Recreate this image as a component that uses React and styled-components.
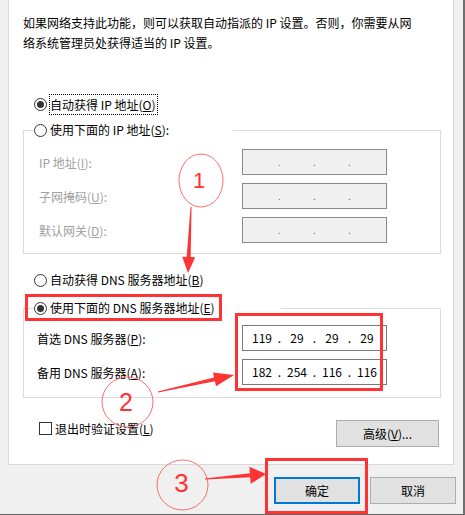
import React from 'react';
import styled, { createGlobalStyle } from 'styled-components';

const GlobalStyle = createGlobalStyle`
  html, body {
    margin: 0;
    padding: 0;
    background: #f0f0f0;
  }
  body {
    font-family: "Noto Sans CJK SC", "Microsoft YaHei", sans-serif;
    font-size: 12px;
    color: #000;
  }
`;

const arrowPoints = (x1, y1, x2, y2, headLen, headW, shaftW) => {
  const dx = x2 - x1;
  const dy = y2 - y1;
  const len = Math.hypot(dx, dy);
  const ux = dx / len;
  const uy = dy / len;
  const px = -uy;
  const py = ux;
  const bx = x2 - ux * headLen;
  const by = y2 - uy * headLen;
  const pts = [
    [x1 + px * 0.5, y1 + py * 0.5],
    [bx + px * shaftW / 2, by + py * shaftW / 2],
    [bx + px * headW / 2, by + py * headW / 2],
    [x2, y2],
    [bx - px * headW / 2, by - py * headW / 2],
    [bx - px * shaftW / 2, by - py * shaftW / 2],
    [x1 - px * 0.5, y1 - py * 0.5],
  ];
  return pts.map(p => p.map(v => v.toFixed(1)).join(',')).join(' ');
};

const App = () => {
  return (
    <Window>
      <GlobalStyle />
      <Panel>
        <Intro>
          如果网络支持此功能，则可以获取自动指派的 IP 设置。否则，你需要从网<br />
          络系统管理员处获得适当的 IP 设置。
        </Intro>

        <RadioRow $top={41}>
          <RadioCircle $checked />
          <Focused>自动获得 IP 地址(<u>O</u>)</Focused>
        </RadioRow>

        <Group $top={6} $padTop={9} $padBottom={10}>
          <GroupLegend $width={199}>
            <RadioCircle />
            <span>使用下面的 IP 地址(<u>S</u>):</span>
          </GroupLegend>
          <FieldRow $indent={15}>
            <FieldLabel $disabled>IP 地址(<u>I</u>):</FieldLabel>
            <IpBox $disabled>
              <Seg /><Dot $disabled>.</Dot><Seg /><Dot $disabled>.</Dot><Seg /><Dot $disabled>.</Dot><Seg />
            </IpBox>
          </FieldRow>
          <FieldRow $indent={15}>
            <FieldLabel $disabled>子网掩码(<u>U</u>):</FieldLabel>
            <IpBox $disabled>
              <Seg /><Dot $disabled>.</Dot><Seg /><Dot $disabled>.</Dot><Seg /><Dot $disabled>.</Dot><Seg />
            </IpBox>
          </FieldRow>
          <FieldRow $indent={15}>
            <FieldLabel $disabled>默认网关(<u>D</u>):</FieldLabel>
            <IpBox $disabled>
              <Seg /><Dot $disabled>.</Dot><Seg /><Dot $disabled>.</Dot><Seg /><Dot $disabled>.</Dot><Seg />
            </IpBox>
          </FieldRow>
        </Group>

        <RadioRow $top={16}>
          <RadioCircle />
          <span>自动获得 DNS 服务器地址(<u>B</u>)</span>
        </RadioRow>

        <Group $top={8} $padTop={7} $padBottom={12}>
          <GroupLegend $width={247}>
            <RadioCircle $checked />
            <span>使用下面的 DNS 服务器地址(<u>E</u>)</span>
          </GroupLegend>
          <FieldRow $indent={13}>
            <FieldLabel>首选 DNS 服务器(<u>P</u>):</FieldLabel>
            <IpBox>
              <Seg>119</Seg><Dot>.</Dot><Seg>29</Seg><Dot>.</Dot><Seg>29</Seg><Dot>.</Dot><Seg>29</Seg>
            </IpBox>
          </FieldRow>
          <FieldRow $indent={13}>
            <FieldLabel>备用 DNS 服务器(<u>A</u>):</FieldLabel>
            <IpBox>
              <Seg>182</Seg><Dot>.</Dot><Seg>254</Seg><Dot>.</Dot><Seg>116</Seg><Dot>.</Dot><Seg>116</Seg>
            </IpBox>
          </FieldRow>
        </Group>

        <OptionsRow>
          <CheckLabel>
            <CheckBox />
            <span>退出时验证设置(<u>L</u>)</span>
          </CheckLabel>
          <Button $width={103}>高级(<u>V</u>)...</Button>
        </OptionsRow>
      </Panel>

      <ButtonBar>
        <Button $width={86} $default>确定</Button>
        <Button $width={86}>取消</Button>
      </ButtonBar>

      <Overlay viewBox="0 0 465 515" width="465" height="515">
        <rect x="26.5" y="295.5" width="194" height="24" fill="none" stroke="#ff3333" strokeWidth="3" />
        <rect x="236.5" y="314.5" width="145" height="75" fill="none" stroke="#ff3333" strokeWidth="3" />
        <rect x="266.5" y="459.5" width="100" height="53" fill="none" stroke="#ff3333" strokeWidth="3" />

        <ellipse cx="201" cy="180.5" rx="22" ry="26.5" fill="none" stroke="#ff6b6b" strokeWidth="1" />
        <ellipse cx="127.5" cy="402" rx="25.5" ry="25" fill="none" stroke="#ff6b6b" strokeWidth="1" />
        <ellipse cx="182.5" cy="485" rx="25.5" ry="25" fill="none" stroke="#ff6b6b" strokeWidth="1" />

        <NumberText x="199" y="188" fontSize="22">1</NumberText>
        <NumberText x="126" y="411" fontSize="25">2</NumberText>
        <NumberText x="181.5" y="492" fontSize="26">3</NumberText>

        <polygon points={arrowPoints(191, 207, 188, 273, 16, 13, 4)} fill="#ff3333" />
        <polygon points={arrowPoints(158, 392, 234, 375, 20, 14, 4)} fill="#ff3333" />
        <polygon points={arrowPoints(205, 479, 266, 474, 16, 17, 4)} fill="#ff3333" />
      </Overlay>
    </Window>
  );
};

export default App;

const Window = styled.div`
  position: relative;
  width: 465px;
  height: 515px;
  box-sizing: border-box;
  background: #f0f0f0;
  border-right: 2px solid #6e6e6e;
  border-bottom: 1px solid #646464;
  display: flex;
  flex-direction: column;
  overflow: hidden;
`;

const Panel = styled.div`
  margin-left: 8px;
  width: 446px;
  height: 465px;
  box-sizing: border-box;
  background: #fff;
  border: 1px solid #d9d9d9;
  border-top: none;
  padding: 13px 12px 0 14px;
  display: flex;
  flex-direction: column;
`;

const Intro = styled.p`
  margin: 0;
  line-height: 20px;
  white-space: nowrap;
`;

const RadioRow = styled.div`
  margin-top: ${p => p.$top}px;
  height: 20px;
  padding-left: 11px;
  display: flex;
  align-items: center;
  gap: 3px;
  line-height: 20px;
`;

const RadioCircle = styled.span`
  flex: none;
  position: relative;
  width: 13px;
  height: 13px;
  box-sizing: border-box;
  border: 1px solid #333;
  border-radius: 50%;
  background: #fff;

  &::after {
    content: '';
    display: ${p => (p.$checked ? 'block' : 'none')};
    position: absolute;
    left: 2px;
    top: 2px;
    width: 7px;
    height: 7px;
    border-radius: 50%;
    background: #333;
  }
`;

const Focused = styled.span`
  border: 1px dotted #000;
  padding: 0 1px 0 0;
  margin-left: -1px;
  line-height: 19px;
`;

const Group = styled.fieldset`
  margin: ${p => p.$top}px 0 0 0;
  width: 418px;
  box-sizing: border-box;
  min-width: 0;
  padding: ${p => p.$padTop}px 0 ${p => p.$padBottom}px 0;
  border: 1px solid #dcdcdc;
  display: flex;
  flex-direction: column;
  gap: 8px;
`;

const GroupLegend = styled.legend`
  margin-left: 10px;
  padding: 0;
  width: ${p => p.$width}px;
  height: 20px;
  display: flex;
  align-items: center;
  gap: 3px;
  line-height: 20px;
  background: #fff;
`;

const FieldRow = styled.div`
  display: grid;
  grid-template-columns: ${p => 218 - p.$indent}px 145px;
  align-items: center;
  padding-left: ${p => p.$indent}px;
  height: 26px;
`;

const FieldLabel = styled.span`
  color: ${p => (p.$disabled ? '#a0a0a0' : '#000')};
`;

const IpBox = styled.div`
  height: 26px;
  box-sizing: border-box;
  border: 1px solid ${p => (p.$disabled ? '#8a8a8a' : '#7a7a7a')};
  background: ${p => (p.$disabled ? '#f0f0f0' : '#fff')};
  display: flex;
  align-items: center;
  padding-left: 3.5px;
`;

const Seg = styled.span`
  width: 31px;
  text-align: center;
  line-height: 20px;
`;

const Dot = styled.span`
  width: 4px;
  text-align: center;
  line-height: 20px;
  color: ${p => (p.$disabled ? '#707070' : '#000')};
  font-size: ${p => (p.$disabled ? '10px' : '12px')};
`;

const OptionsRow = styled.div`
  margin-top: 22px;
  height: 27px;
  padding-left: 16px;
  padding-right: 2px;
  display: flex;
  justify-content: space-between;
  align-items: flex-start;
`;

const CheckLabel = styled.label`
  margin-top: 2px;
  display: flex;
  align-items: center;
  gap: 3px;
  line-height: 13px;
  height: 13px;
`;

const CheckBox = styled.span`
  width: 13px;
  height: 13px;
  box-sizing: border-box;
  border: 1px solid #333;
  background: #fff;
`;

const ButtonBar = styled.div`
  margin-top: 12px;
  padding-right: 7px;
  display: flex;
  justify-content: flex-end;
  gap: 10px;
`;

const Button = styled.button`
  width: ${p => p.$width}px;
  height: 27px;
  box-sizing: border-box;
  padding: 0;
  font-family: inherit;
  font-size: 12px;
  color: #000;
  background: #e1e1e1;
  border: ${p => (p.$default ? '2px solid #0078d7' : '1px solid #adadad')};
`;

const Overlay = styled.svg`
  position: absolute;
  left: 0;
  top: 0;
  pointer-events: none;
`;

const NumberText = styled.text`
  font-family: "Liberation Sans", Arial, sans-serif;
  fill: #ff3333;
  text-anchor: middle;
`;
